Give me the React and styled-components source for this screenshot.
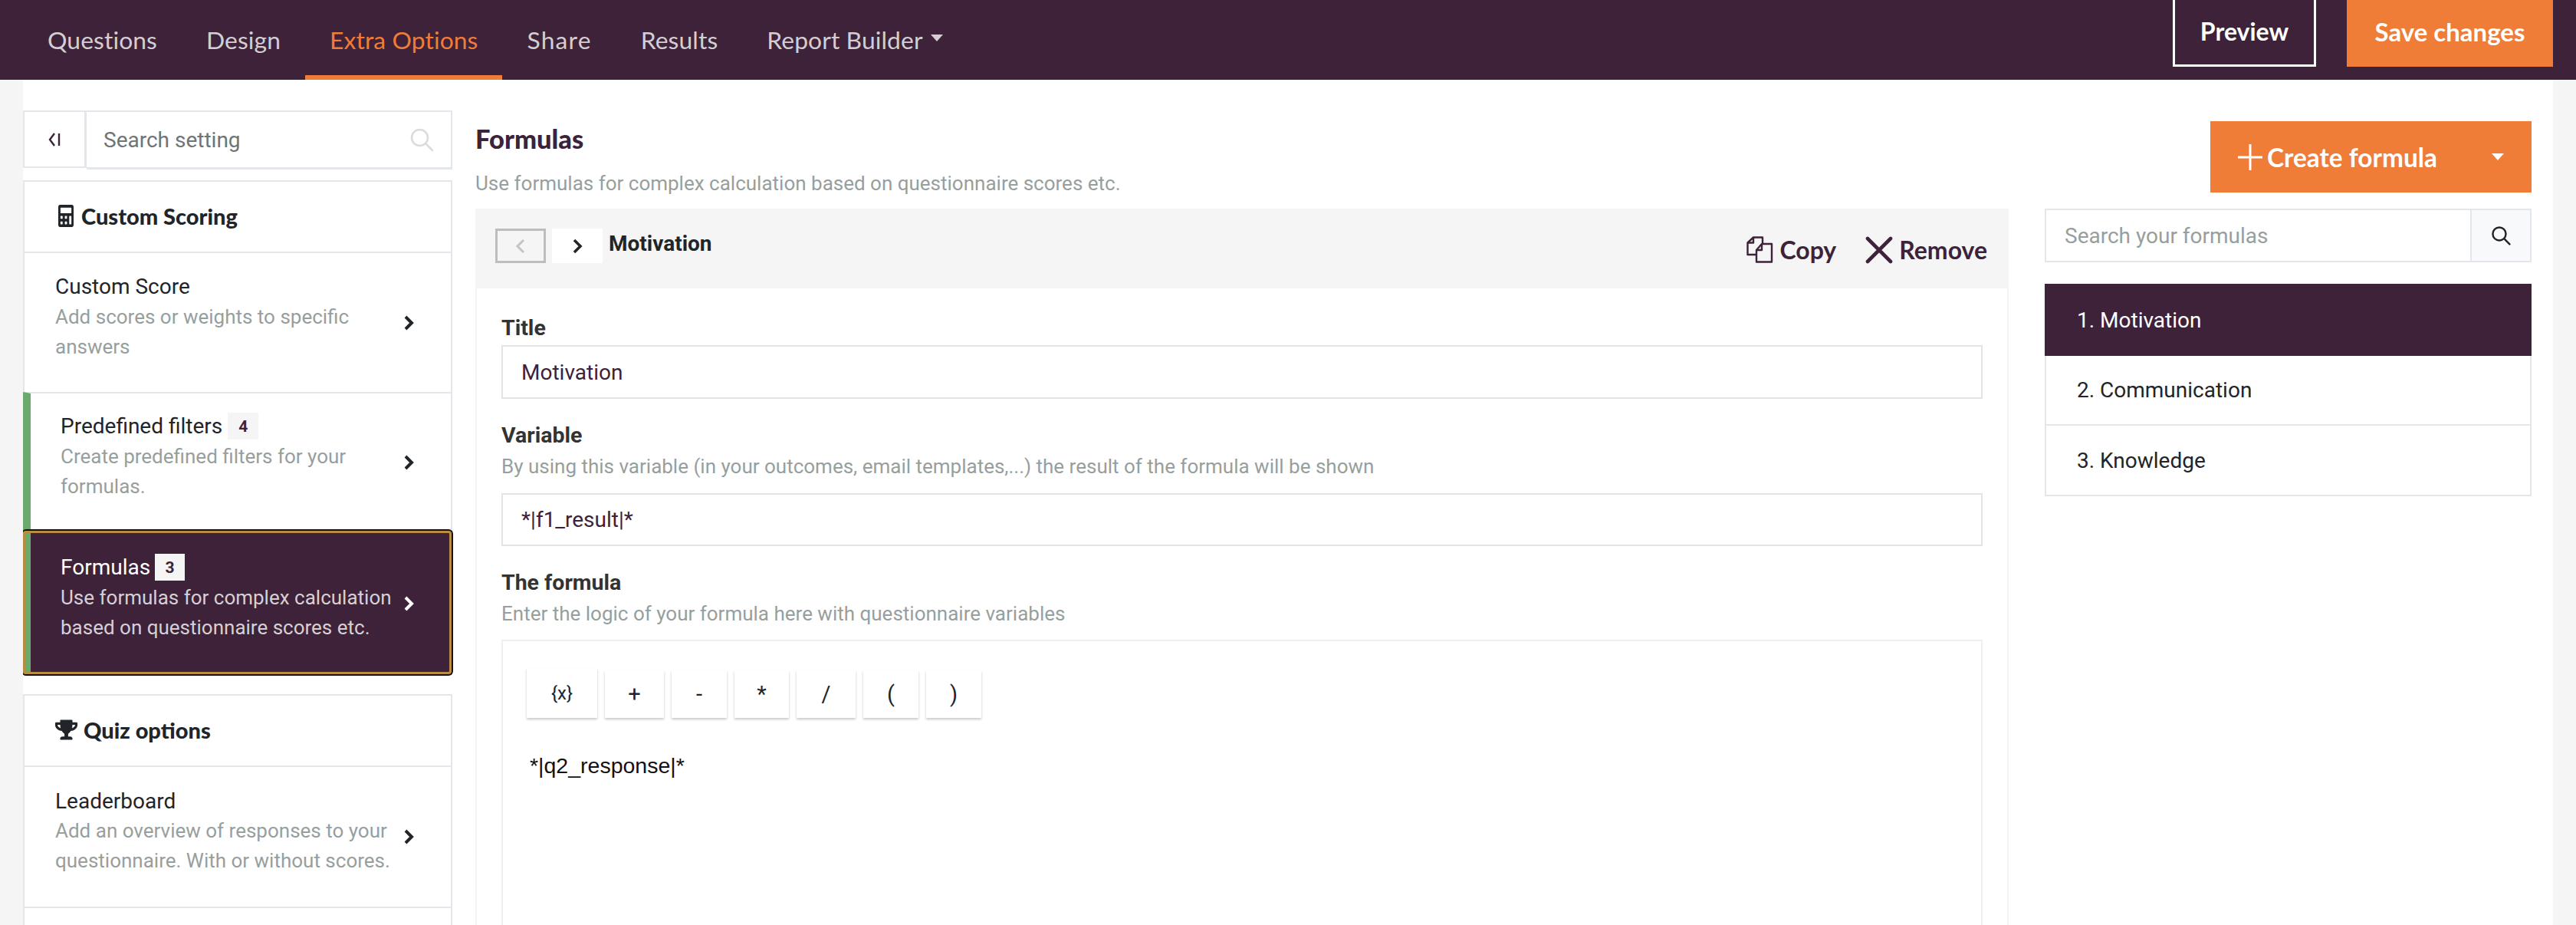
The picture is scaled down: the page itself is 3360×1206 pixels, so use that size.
import React from "react";
import styled, { createGlobalStyle } from "styled-components";
import { FaCalculator, FaTrophy } from "react-icons/fa";

const PLUM = "#3d2239";
const ORANGE = "#ef7c37";
const LINE = "#e3e6ea";
const MUTED = "#979f9e";
const HEAD = '"Lato", "Liberation Sans", sans-serif';
const BODY = 'Roboto, "Liberation Sans", sans-serif';

const Global = createGlobalStyle`
  html, body { margin: 0; padding: 0; height: 1206px; overflow: hidden; background: #f5f5f5; }
  * { box-sizing: border-box; }
`;

const Page = styled.div`
  width: 3360px;
  height: 1206px;
  overflow: hidden;
  font-family: ${BODY};
`;

const Nav = styled.nav`
  height: 104px;
  background: ${PLUM};
  display: flex;
  justify-content: space-between;
  padding-left: 30px;
  padding-right: 30px;
`;

const Tabs = styled.div`
  display: flex;
`;

const Tab = styled.a`
  display: flex;
  align-items: center;
  gap: 10px;
  height: 104px;
  padding: 6px 32px 0;
  font: 400 31.8px ${HEAD};
  letter-spacing: ${(p) => p.$ls || 0.1}px;
  color: ${(p) => (p.$active ? ORANGE : "#d4ced3")};
  border-bottom: 6px solid ${(p) => (p.$active ? ORANGE : "transparent")};
`;

const Caret = styled.span`
  width: 0;
  height: 0;
  margin-top: ${(p) => p.$mt}px;
  border-left: 8px solid transparent;
  border-right: 8px solid transparent;
  border-top: 9px solid ${(p) => p.$color || "#d4ced3"};
`;

const NavActions = styled.div`
  display: flex;
  gap: 40px;
`;

const PreviewButton = styled.button`
  width: 187px;
  height: 87px;
  padding: 0 0 3px;
  background: transparent;
  border: 3px solid #fff;
  border-top: 0;
  color: #fff;
  font: 700 32px ${HEAD};
`;

const SaveButton = styled.button`
  width: 269px;
  height: 87px;
  padding: 0 0 5px;
  background: ${ORANGE};
  border: 0;
  color: #fff;
  font: 700 33px ${HEAD};
`;

const Main = styled.main`
  margin: 0 30px;
  height: 1102px;
  background: #fff;
  display: grid;
  grid-template-columns: 560px 2000px 635px;
  column-gap: 30px;
  padding-top: 40px;
  overflow: hidden;
`;

const Sidebar = styled.aside`
  display: flex;
  flex-direction: column;
`;

const SideSearch = styled.div`
  display: flex;
  height: 77px;
  margin-bottom: 14px;
`;

const Collapse = styled.button`
  width: 83px;
  height: 75px;
  padding: 0;
  background: #fff;
  border: 2px solid ${LINE};
  border-right-width: 3px;
  display: flex;
  align-items: center;
  justify-content: center;
  color: ${PLUM};
`;

const SideInputBox = styled.div`
  flex: 1;
  display: flex;
  align-items: center;
  justify-content: space-between;
  padding: 0 22px;
  border: 2px solid ${LINE};
  border-left: 0;
  border-bottom-width: 3px;
  font: 400 28px ${BODY};
  color: #6f7474;
`;

const Card = styled.section`
  border: 2px solid ${LINE};
  border-bottom: 0;
  background: #fff;
  margin-bottom: ${(p) => p.$mb || 0}px;
`;

const CardHead = styled.div`
  height: 91px;
  padding-bottom: 2px;
  display: flex;
  align-items: center;
  gap: ${(p) => p.$gap}px;
  padding-left: ${(p) => p.$pad}px;
  font: 900 29px ${HEAD};
  color: #212529;
`;

const Row = styled.div`
  position: relative;
  display: flex;
  align-items: center;
  justify-content: space-between;
  height: ${(p) => p.$h}px;
  margin: ${(p) => (p.$active ? "0 -2px" : p.$bar ? "0 0 0 -2px" : "0")};
  padding: 0 ${(p) => (p.$active ? 50 : 48)}px 0 ${(p) => (p.$bar ? 39 : 40)}px;
  border-top: 2px solid ${(p) => (p.$active ? "transparent" : LINE)};
  border-left: ${(p) => (p.$bar ? "10px solid #6aaa6a" : "0")};
  background: ${(p) => (p.$active ? PLUM : "#fff")};
  color: ${(p) => (p.$active ? "#fff" : "#212529")};
`;

const FocusRing = styled.span`
  position: absolute;
  top: -2px;
  bottom: 0;
  left: -10px;
  right: 1px;
  border: 3px solid #b98c42;
  border-radius: 4px;
  box-shadow: 0 0 0 2px #111;
  pointer-events: none;
`;

const RowText = styled.div`
  width: 446px;
  margin-top: -16px;
`;

const RowTitle = styled.div`
  display: flex;
  align-items: center;
  height: 40px;
  font: 400 28px ${BODY};
`;

const Badge = styled.span`
  display: inline-flex;
  align-items: center;
  justify-content: center;
  width: ${(p) => p.$w}px;
  height: 35px;
  margin-left: ${(p) => p.$ml}px;
  background: #f5f5f5;
  color: ${PLUM};
  font: 700 21px ${BODY};
`;

const RowDesc = styled.div`
  font: 400 26px/39px ${BODY};
  color: ${(p) => (p.$active ? "#d6d0d4" : MUTED)};
`;

const Center = styled.div`
  display: flex;
  flex-direction: column;
  padding-top: 19px;
`;

const PageTitle = styled.h1`
  margin: 0;
  height: 38px;
  font: 900 34.5px/35px ${HEAD};
  color: ${PLUM};
`;

const PageSub = styled.p`
  margin: 20px 0 15px;
  font: 400 26px/36px ${BODY};
  color: ${MUTED};
`;

const PanelHead = styled.div`
  height: 104px;
  flex: none;
  background: #f5f5f5;
  display: flex;
  justify-content: space-between;
  padding: 26px 28px 0 26px;
`;

const PagerGroup = styled.div`
  display: flex;
  gap: 8px;
`;

const Pager = styled.button`
  width: 66px;
  height: 45px;
  padding: 0;
  display: flex;
  align-items: center;
  justify-content: center;
  background: ${(p) => (p.$disabled ? "transparent" : "#fff")};
  border: ${(p) => (p.$disabled ? "3px solid #bdbdbd" : "0")};
`;

const PanelName = styled.div`
  font: 700 28px/40px ${BODY};
  color: #212529;
`;

const PanelActions = styled.div`
  display: flex;
  gap: 38px;
  padding-top: 10px;
`;

const PanelAction = styled.span`
  display: flex;
  align-items: flex-start;
  gap: 8px;
  font: 700 32px/36px ${HEAD};
  color: ${PLUM};
`;

const PanelBody = styled.div`
  flex: 1;
  padding: 36px 32px 0 32px;
  border-left: 2px solid #f3f3f3;
  border-right: 2px solid #f3f3f3;
`;

const Label = styled.div`
  font: 700 28.5px/32px ${BODY};
  color: #333;
`;

const Hint = styled.div`
  margin-top: 8px;
  font: 400 26px/32px ${BODY};
  color: ${MUTED};
`;

const TextField = styled.div`
  height: ${(p) => p.$h}px;
  margin: ${(p) => p.$mt}px 0 32px;
  padding: 0 24px;
  display: flex;
  align-items: center;
  border: 2px solid #e4e4e4;
  font: 400 28px ${BODY};
  color: ${PLUM};
`;

const Editor = styled.div`
  margin-top: 18px;
  height: 400px;
  padding: 35px 31px;
  border: 2px solid #efefef;
`;

const ToolRow = styled.div`
  display: flex;
  gap: 10px;
  align-items: flex-end;
`;

const ToolButton = styled.button`
  width: ${(p) => p.$w}px;
  height: ${(p) => p.$h || 62}px;
  padding: 0;
  background: #fff;
  border: 0;
  box-shadow: 0 2px 3px rgba(0, 0, 0, 0.22);
  color: #212529;
  font: 400 ${(p) => p.$size || 29}px ${BODY};
`;

const FormulaText = styled.div`
  margin: 42px 0 0 4px;
  font: 400 28.5px/40px "Liberation Sans", Arial, sans-serif;
  color: #111;
`;

const Right = styled.div`
  display: flex;
  flex-direction: column;
  padding-top: 14px;
  margin-left: 17px;
  width: 635px;
`;

const CreateButton = styled.button`
  align-self: flex-end;
  width: 419px;
  height: 93px;
  display: flex;
  align-items: center;
  padding: 0 36px;
  background: ${ORANGE};
  border: 0;
  color: #fff;
  font: 700 33.4px ${HEAD};
`;

const CreateLabel = styled.span`
  flex: 1;
  margin-left: 6px;
  text-align: left;
`;

const SearchBar = styled.div`
  display: flex;
  height: 70px;
  margin: 21px 0 28px;
  border: 2px solid ${LINE};
`;

const SearchText = styled.div`
  flex: 1;
  display: flex;
  align-items: center;
  padding-left: 24px;
  font: 400 28px ${BODY};
  color: ${MUTED};
`;

const SearchAddon = styled.div`
  width: 78px;
  display: flex;
  align-items: center;
  justify-content: center;
  background: #f8f9fa;
  border-left: 2px solid ${LINE};
`;

const FormulaList = styled.div`
  display: flex;
  flex-direction: column;
`;

const FormulaRow = styled.div`
  height: ${(p) => p.$h}px;
  display: flex;
  align-items: center;
  padding-left: 40px;
  font: 400 28px ${BODY};
  color: ${(p) => (p.$active ? "#fff" : "#212529")};
  background: ${(p) => (p.$active ? PLUM : "#fff")};
  border: 2px solid ${(p) => (p.$active ? PLUM : LINE)};
  border-top-width: ${(p) => (p.$first ? 0 : 2)}px;
  margin-top: ${(p) => (p.$active || p.$first ? 0 : -2)}px;
`;

const Chevron = ({ color = "#212529", w = 14, h = 22, stroke = 4, dir = "right" }) => (
  <svg width={w} height={h} viewBox="0 0 14 22" fill="none" style={{ flex: "none" }}>
    <path
      d={dir === "right" ? "M3 3l8 8-8 8" : "M11 3l-8 8 8 8"}
      stroke={color}
      strokeWidth={stroke}
    />
  </svg>
);

const SearchIcon = ({ color, size = 32, w = 2.6 }) => (
  <svg width={size} height={size} viewBox="0 0 32 32" fill="none" stroke={color} strokeWidth={w}>
    <circle cx="13.5" cy="13.5" r="10.5" />
    <path d="M21.5 21.5L30 30" strokeLinecap="round" />
  </svg>
);

const CopyIcon = () => (
  <svg width="35" height="35" viewBox="0 0 35 35" fill="none" stroke={PLUM} strokeWidth="2.4" strokeLinejoin="round">
    <path d="M13 24H1.5V8.5L9 1.5h12v8.5" />
    <path d="M9 1.5V8.5H1.5" />
    <path d="M13 33.5V18l7-8h13v23.5z" />
    <path d="M20 10v8h-7" />
  </svg>
);

const CloseIcon = () => (
  <svg width="36" height="36" viewBox="0 0 36 36" fill="none" stroke={PLUM} strokeWidth="4.6" strokeLinecap="round">
    <path d="M3 3l30 30M33 3L3 33" />
  </svg>
);

const PlusIcon = () => (
  <svg width="32" height="34" viewBox="0 0 32 34" fill="none" stroke="#fff" strokeWidth="3">
    <path d="M16 0v34M0 17h32" />
  </svg>
);

const CollapseIcon = () => (
  <svg width="16" height="20" viewBox="0 0 16 20" fill="none" stroke={PLUM} strokeWidth="2.4">
    <path d="M8 2L2 10l6 8" />
    <path d="M14 2v16" />
  </svg>
);

const CalcIcon = styled(FaCalculator)`
  width: 20px;
  height: 29px;
  flex: none;
`;

export default function App() {
  return (
    <Page>
      <Global />
      <Nav>
        <Tabs>
          <Tab>Questions</Tab>
          <Tab>Design</Tab>
          <Tab $active>Extra Options</Tab>
          <Tab $ls={1.2}>Share</Tab>
          <Tab>Results</Tab>
          <Tab>
            Report Builder
            <Caret $mt={-6} />
          </Tab>
        </Tabs>
        <NavActions>
          <PreviewButton>Preview</PreviewButton>
          <SaveButton>Save changes</SaveButton>
        </NavActions>
      </Nav>
      <Main>
        <Sidebar>
          <SideSearch>
            <Collapse>
              <CollapseIcon />
            </Collapse>
            <SideInputBox>
              Search setting
              <SearchIcon color="#dcdcdc" />
            </SideInputBox>
          </SideSearch>
          <Card $mb={26}>
            <CardHead $pad={44} $gap={10}>
              <CalcIcon color="#212529" preserveAspectRatio="none" />
              Custom Scoring
            </CardHead>
            <Row $h={183}>
              <RowText>
                <RowTitle>Custom Score</RowTitle>
                <RowDesc>Add scores or weights to specific answers</RowDesc>
              </RowText>
              <Chevron />
            </Row>
            <Row $h={181} $bar>
              <RowText>
                <RowTitle>
                  Predefined filters
                  <Badge $w={40} $ml={7}>4</Badge>
                </RowTitle>
                <RowDesc>Create predefined filters for your formulas.</RowDesc>
              </RowText>
              <Chevron />
            </Row>
            <Row $h={187} $bar $active>
              <FocusRing />
              <RowText>
                <RowTitle>
                  Formulas
                  <Badge $w={39} $ml={6}>3</Badge>
                </RowTitle>
                <RowDesc $active>Use formulas for complex calculation based on questionnaire scores etc.</RowDesc>
              </RowText>
              <Chevron color="#fff" />
            </Row>
          </Card>
          <Card>
            <CardHead $pad={40} $gap={8}>
              <FaTrophy size={29} color="#212529" />
              Quiz options
            </CardHead>
            <Row $h={184}>
              <RowText>
                <RowTitle>Leaderboard</RowTitle>
                <RowDesc>Add an overview of responses to your questionnaire. With or without scores.</RowDesc>
              </RowText>
              <Chevron />
            </Row>
            <Row $h={60} />
          </Card>
        </Sidebar>
        <Center>
          <PageTitle>Formulas</PageTitle>
          <PageSub>Use formulas for complex calculation based on questionnaire scores etc.</PageSub>
          <PanelHead>
            <PagerGroup>
              <Pager $disabled>
                <Chevron color="#c4c4c4" dir="left" stroke={3} />
              </Pager>
              <Pager>
                <Chevron stroke={3.6} />
              </Pager>
              <PanelName>Motivation</PanelName>
            </PagerGroup>
            <PanelActions>
              <PanelAction>
                <CopyIcon />
                Copy
              </PanelAction>
              <PanelAction>
                <CloseIcon />
                Remove
              </PanelAction>
            </PanelActions>
          </PanelHead>
          <PanelBody>
            <Label>Title</Label>
            <TextField $h={70} $mt={6}>Motivation</TextField>
            <Label>Variable</Label>
            <Hint>By using this variable (in your outcomes, email templates,...) the result of the formula will be shown</Hint>
            <TextField $h={69} $mt={19}>*|f1_result|*</TextField>
            <Label>The formula</Label>
            <Hint>Enter the logic of your formula here with questionnaire variables</Hint>
            <Editor>
              <ToolRow>
                <ToolButton $w={92} $h={65} $size={24}>{"{x}"}</ToolButton>
                <ToolButton $w={77}>+</ToolButton>
                <ToolButton $w={72}>-</ToolButton>
                <ToolButton $w={71}>*</ToolButton>
                <ToolButton $w={77}>/</ToolButton>
                <ToolButton $w={72}>(</ToolButton>
                <ToolButton $w={72}>)</ToolButton>
              </ToolRow>
              <FormulaText>*|q2_response|*</FormulaText>
            </Editor>
          </PanelBody>
        </Center>
        <Right>
          <CreateButton>
            <PlusIcon />
            <CreateLabel>Create formula</CreateLabel>
            <Caret $color="#fff" />
          </CreateButton>
          <SearchBar>
            <SearchText>Search your formulas</SearchText>
            <SearchAddon>
              <SearchIcon color="#212529" size={26} w={3} />
            </SearchAddon>
          </SearchBar>
          <FormulaList>
            <FormulaRow $h={94} $active>1. Motivation</FormulaRow>
            <FormulaRow $h={91} $first>2. Communication</FormulaRow>
            <FormulaRow $h={94}>3. Knowledge</FormulaRow>
          </FormulaList>
        </Right>
      </Main>
    </Page>
  );
}
